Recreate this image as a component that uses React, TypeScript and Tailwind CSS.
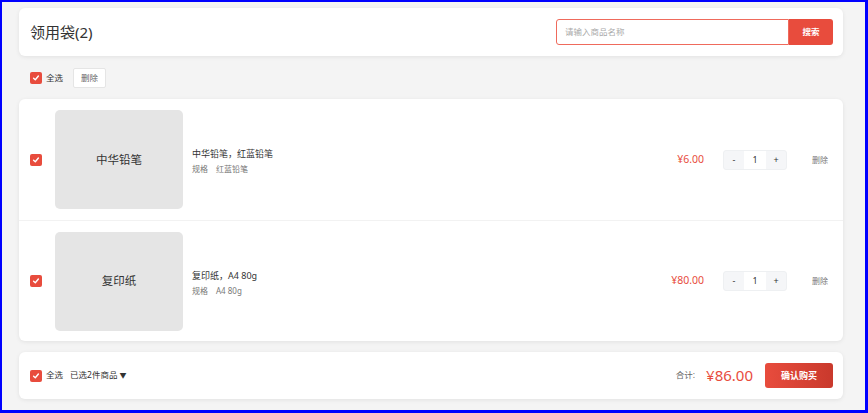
import React from "react";

const items = [
  { id: 1, thumb: "中华铅笔", name: "中华铅笔，红蓝铅笔", spec: "红蓝铅笔", price: "¥6.00", qty: 1 },
  { id: 2, thumb: "复印纸", name: "复印纸，A4 80g", spec: "A4 80g", price: "¥80.00", qty: 1 },
];

function Check() {
  return (
    <span className="w-3 h-3 rounded-[2px] bg-[#e84c3d] flex items-center justify-center flex-shrink-0">
      <svg width="8" height="8" viewBox="0 0 8 8" fill="none">
        <path d="M1.6 4.2l1.7 1.6L6.4 2" stroke="#fff" strokeWidth="1.4" strokeLinecap="round" strokeLinejoin="round" />
      </svg>
    </span>
  );
}

export default function App() {
  return (
    <div
      className="w-[868px] h-[413px] box-border bg-[#f4f4f4] border-l-2 border-t-2 border-r-[3px] border-b-[3px] border-[#0000ff] pl-[17px] pr-[22px] pt-[6px] text-[#333]"
      style={{ fontFamily: '"Noto Sans", "Noto Sans CJK SC", sans-serif' }}
    >
      {/* Header */}
      <div className="h-[48px] bg-white rounded-md shadow-[0_1px_4px_rgba(0,0,0,0.08)] flex items-center justify-between pl-[11px] pr-[10px]">
        <h1 className="text-[15px] leading-none text-[#333]">领用袋(2)</h1>
        <div className="flex h-[26px]">
          <div className="w-[233px] border border-[#ef6a5c] rounded-l-[3px] flex items-center pl-[8px] text-[8.5px] text-[#aaa]">
            请输入商品名称
          </div>
          <button className="w-[44px] bg-[#e84c3d] rounded-r-[3px] text-white text-[8.5px] font-bold">搜索</button>
        </div>
      </div>

      {/* Toolbar */}
      <div className="flex items-center h-[20px] mt-[12px] pl-[11px]">
        <Check />
        <span className="ml-[4px] text-[8.5px]">全选</span>
        <button className="ml-[10px] h-[20px] w-[33px] bg-white border border-[#e5e5e5] rounded-[2px] text-[8.5px] text-[#666]">
          删除
        </button>
      </div>

      {/* List */}
      <div className="mt-[11px] bg-white rounded-md shadow-[0_1px_4px_rgba(0,0,0,0.08)]">
        {items.map((it, i) => (
          <div
            key={it.id}
            className={`h-[121px] flex items-center pl-[11px] pr-[15px] ${i > 0 ? "border-t border-[#f2f2f2]" : ""}`}
          >
            <Check />
            <div className="ml-[13px] w-[128px] h-[99px] rounded-[5px] bg-[#e5e5e5] flex items-center justify-center text-[11.5px] text-[#333]">
              {it.thumb}
            </div>
            <div className="ml-[9px] flex-1 mt-[2px]">
              <div className="text-[9px] leading-[13px] text-[#333]">{it.name}</div>
              <div className="mt-[3px] text-[8px] leading-[11px] text-[#777]">
                规格<span className="ml-[8px]">{it.spec}</span>
              </div>
            </div>
            <div className="text-[10.5px] text-[#e84c3d] mr-[19px]">{it.price}</div>
            <div className="flex h-[20px] w-[64px] rounded-[3px] bg-[#f5f6f8] border border-[#eef0f2] text-[9px] text-[#333]">
              <span className="w-[20px] flex items-center justify-center">-</span>
              <span className="flex-1 bg-white flex items-center justify-center">{it.qty}</span>
              <span className="w-[20px] flex items-center justify-center">+</span>
            </div>
            <span className="ml-[25px] text-[8px] text-[#777]">删除</span>
          </div>
        ))}
      </div>

      {/* Footer */}
      <div className="mt-[11px] h-[47px] bg-white rounded-md shadow-[0_1px_4px_rgba(0,0,0,0.08)] flex items-center pl-[11px] pr-[10px]">
        <Check />
        <span className="ml-[4px] text-[8.5px]">全选</span>
        <span className="ml-[7px] text-[8.5px]">
          已选2件商品<span className="ml-[2px] text-[7px]">▼</span>
        </span>
        <div className="ml-auto flex items-center">
          <span className="text-[8.5px] text-[#666]">合计:</span>
          <span className="ml-[11px] text-[15px] text-[#e84c3d]">¥86.00</span>
          <button className="ml-[12px] w-[68px] h-[25px] rounded-[3px] bg-gradient-to-r from-[#e84c3d] to-[#c9392c] text-white text-[9px] font-bold">
            确认购买
          </button>
        </div>
      </div>
    </div>
  );
}
